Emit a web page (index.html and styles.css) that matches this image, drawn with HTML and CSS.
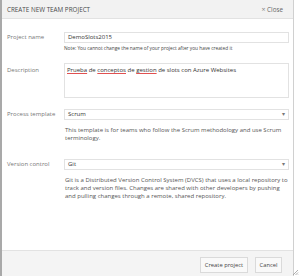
FILE: index.html
```html
<!DOCTYPE html>
<html>
<head>
<meta charset="utf-8">
<link rel="stylesheet" href="styles.css">
</head>
<body>
<div class="dialog">
  <div class="header">
    <span class="title">CREATE NEW TEAM PROJECT</span>
    <span class="close"><span class="x">×</span> Close</span>
  </div>
  <div class="body">
    <div class="row row-name">
      <div class="label">Project name</div>
      <div class="field">
        <div class="input">DemoSlots2015</div>
        <div class="note">Note: You cannot change the name of your project after you have created it</div>
      </div>
    </div>
    <div class="row row-desc">
      <div class="label label-desc">Description</div>
      <div class="field">
        <div class="textarea"><span class="sp">Prueba</span> de <span class="sp">conceptos</span> de <span class="sp">gestion</span> de slots con Azure Websites</div>
      </div>
    </div>
    <div class="row row-proc">
      <div class="label">Process template</div>
      <div class="field">
        <div class="select"><span>Scrum</span><span class="arrow">▾</span></div>
        <div class="help">This template is for teams who follow the Scrum methodology and use Scrum terminology.</div>
      </div>
    </div>
    <div class="row row-vc">
      <div class="label">Version control</div>
      <div class="field">
        <div class="select"><span>Git</span><span class="arrow">▾</span></div>
        <div class="help">Git is a Distributed Version Control System (DVCS) that uses a local repository to track and version files. Changes are shared with other developers by pushing and pulling changes through a remote, shared repository.</div>
      </div>
    </div>
  </div>
  <div class="footer">
    <button class="btn btn-create">Create project</button>
    <button class="btn btn-cancel">Cancel</button>
  </div>
  <svg class="grip" width="7" height="7" viewBox="0 0 7 7"><path d="M6 1L1 6M6 3.5L3.5 6M6 5.5L5.5 6" stroke="#999" stroke-width="0.8"/></svg>
</div>
</body>
</html>
```
FILE: styles.css
```css
* { box-sizing: border-box; }
html, body { margin: 0; padding: 0; background: #fff; }
body { width: 300px; height: 276px; overflow: hidden; font-family: "Open Sans", sans-serif; color: #444; }
.dialog {
  position: relative;
  width: 294px;
  height: 276px;
  border-left: 2px solid #a9a9a9;
  border-right: 1px solid #d0d0d0;
  display: flex;
  flex-direction: column;
  background: #fff;
}
.header {
  height: 19px;
  flex: none;
  background: #f2f2f2;
  border-bottom: 1px solid #e2e2e2;
  display: flex;
  align-items: center;
  justify-content: space-between;
  padding: 0 10px 0 5px;
  font-size: 6.3px;
}
.title { color: #4a4a4a; }
.close { color: #666; font-size: 6.3px; }
.close .x { font-size: 7px; color: #888; }
.body { flex: 1; padding: 13px 4px 0 5px; }
.row { display: grid; grid-template-columns: 57px 1fr; }
.label { font-size: 6px; color: #777; line-height: 11px; }
.input, .select {
  height: 11px;
  border: 1px solid #e2e2e2;
  font-size: 6px;
  line-height: 9px;
  padding: 0 3px;
  color: #333;
}
.select { display: flex; justify-content: space-between; }
.arrow { font-size: 6px; color: #777; }
.note { font-size: 4.8px; line-height: 8px; margin-top: 1px; color: #444; }
.row-desc { margin-top: 11px; }
.label-desc { padding-top: 2px; }
.textarea {
  height: 35px;
  border: 1px solid #e2e2e2;
  font-size: 6px;
  line-height: 9px;
  padding: 2px 2px;
  color: #333;
}
.sp { text-decoration: underline solid #e05050; text-decoration-thickness: 0.6px; text-underline-offset: 1.2px; }
.row-proc { margin-top: 11px; }
.help { font-size: 6px; line-height: 8px; margin-top: 6px; color: #555; padding-left: 1px; }
.row-vc { margin-top: 17px; }
.footer {
  flex: none;
  height: 26px;
  background: #f4f4f4;
  border-top: 1px solid #e2e2e2;
  display: flex;
  justify-content: flex-end;
  align-items: center;
  gap: 7px;
  padding: 0 11px 0 0;
}
.btn {
  font-family: "Open Sans", sans-serif;
  font-size: 5.8px;
  color: #444;
  background: #f9f9f9;
  border: 1px solid #dadada;
  height: 16px;
  margin: 0;
  margin-top: 2px;
}
.btn-create { width: 48px; padding: 0; }
.btn-cancel { width: 27px; padding: 0; }
.grip { position: absolute; right: -6px; bottom: 0; }
```
